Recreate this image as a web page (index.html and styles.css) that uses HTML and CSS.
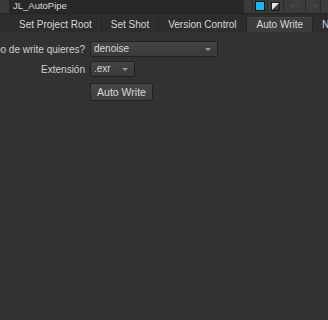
FILE: index.html
```html
<!DOCTYPE html>
<html lang="es">
<head>
    <meta charset="UTF-8">
    <meta name="viewport" content="width=device-width, initial-scale=1.0">
    <title>JL_AutoPipe</title>
    <link rel="stylesheet" href="styles.css">
</head>
<body>
    <!-- Panel header -->
    <div class="topbar">
        <div class="grip"></div>
        <div class="title">JL_AutoPipe</div>
        <div class="tools">
            <div class="tool"><span class="swatch"></span></div>
            <div class="tool diag">
                <svg width="9" height="9" viewBox="0 0 9 9">
                    <rect x="0.5" y="0.5" width="8" height="8" fill="#e6e6e6" stroke="#1c1c1c"/>
                    <path d="M8 1 L1 8 L8 8 Z" fill="#3a3a3a"/>
                </svg>
            </div>
            <div class="tool undo">
                <svg width="10" height="7" viewBox="0 0 10 7">
                    <path d="M2 4 Q5 0 9 4" fill="none" stroke="#4a4a4a" stroke-width="1.2"/>
                    <path d="M0 2 L3 6 L4 2 Z" fill="#4a4a4a"/>
                </svg>
            </div>
            <div class="tool redo">
                <svg width="10" height="7" viewBox="0 0 10 7">
                    <path d="M1 4 Q5 0 8 4" fill="none" stroke="#4a4a4a" stroke-width="1.2"/>
                    <path d="M10 2 L7 6 L6 2 Z" fill="#4a4a4a"/>
                </svg>
            </div>
            <div class="tool last"></div>
        </div>
    </div>

    <!-- Tabs -->
    <div class="tabs">
        <div class="tab">Set Project Root</div>
        <div class="tab">Set Shot</div>
        <div class="tab">Version Control</div>
        <div class="tab active">Auto Write</div>
        <div class="tab">Nuke</div>
    </div>

    <!-- Knobs -->
    <div class="form">
        <div class="label">¿Qué tipo de write quieres?</div>
        <div class="combo long">denoise<span class="arrow"></span></div>

        <div class="label">Extensión</div>
        <div class="combo short">.exr<span class="arrow"></span></div>

        <div></div>
        <div><button class="btn">Auto Write</button></div>
    </div>
</body>
</html>
```

FILE: styles.css
```css
html, body {
    margin: 0;
    padding: 0;
    height: 100%;
    overflow: hidden;
}
body {
    background-color: #323232;
    color: #d6d6d6;
    font-family: 'Liberation Sans', Arial, sans-serif;
    font-size: 10px;
}
.topbar {
    display: flex;
    height: 13px;
    background-color: #3a3a3a;
    border-bottom: 1px solid #222;
}
.grip {
    width: 9px;
    border-right: 1px solid #262626;
}
.title {
    flex: 1;
    background-color: #282828;
    color: #dadada;
    padding-left: 3px;
    line-height: 12px;
    font-size: 9.5px;
    margin-right: 8px;
}
.tools {
    display: flex;
}
.tool {
    width: 14px;
    height: 12px;
    display: flex;
    align-items: center;
    justify-content: center;
    border-left: 1px solid #2a2a2a;
    background-color: #3c3c3c;
}
.tool.diag {
    width: 15px;
}
.tool.undo {
    width: 21px;
}
.tool.redo {
    width: 14px;
}
.tool.last {
    width: 7px;
}
.swatch {
    width: 8px;
    height: 8px;
    background-color: #15b9ee;
    border: 1px solid #111;
}
.tabs {
    display: flex;
    height: 18px;
    padding-left: 10px;
    background-color: #2d2d2d;
    align-items: flex-end;
}
.tab {
    height: 15px;
    line-height: 15px;
    padding: 0 9px;
    border-right: 1px solid #242424;
    white-space: nowrap;
    color: #d8d8d8;
}
.tab.active {
    background-color: #3c3c3c;
    border-top: 1px solid #474747;
    height: 14px;
    line-height: 14px;
    padding: 0 9px 0 10px;
}
.form {
    display: grid;
    grid-template-columns: 85px auto;
    column-gap: 5px;
    row-gap: 4px;
    padding-top: 9px;
    align-items: center;
}
.label {
    display: flex;
    justify-content: flex-end;
    white-space: nowrap;
    color: #d0d0d0;
}
.combo {
    position: relative;
    height: 14px;
    line-height: 14px;
    padding-left: 3px;
    background: linear-gradient(#434343, #3a3a3a);
    border: 1px solid #222;
    border-radius: 2px;
    color: #d8d8d8;
    box-sizing: content-box;
}
.combo.long {
    width: 123px;
}
.combo.short {
    width: 40px;
}
.arrow {
    position: absolute;
    right: 6px;
    top: 6px;
    border-left: 3px solid transparent;
    border-right: 3px solid transparent;
    border-top: 3px solid #9a9a9a;
}
.btn {
    margin-top: 2px;
    height: 18px;
    width: 63px;
    padding: 0;
    background: linear-gradient(#474747, #3d3d3d);
    border: 1px solid #232323;
    border-radius: 2px;
    color: #dadada;
    font-family: 'Liberation Sans', Arial, sans-serif;
    font-size: 10.5px;
}
```
